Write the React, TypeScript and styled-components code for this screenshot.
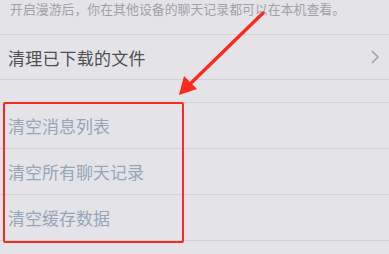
import React from 'react';
import styled, { createGlobalStyle } from 'styled-components';

const GlobalStyle = createGlobalStyle`
  html, body {
    margin: 0;
    padding: 0;
    background: #e4e4e8;
  }
  body {
    font-family: "Noto Sans CJK SC", "Noto Sans", sans-serif;
    overflow: hidden;
  }
`;

const clearItems = ['清空消息列表', '清空所有聊天记录', '清空缓存数据'];

const App: React.FC = () => {
  return (
    <Page>
      <GlobalStyle />
      <Hint>开启漫游后，你在其他设备的聊天记录都可以在本机查看。</Hint>
      <Row>
        <RowLabel>清理已下载的文件</RowLabel>
        <Chevron viewBox="0 0 10 16">
          <path d="M2 2 L8 8 L2 14" fill="none" stroke="#a3a3a8" strokeWidth="1.6" />
        </Chevron>
      </Row>
      <Gap />
      <List>
        {clearItems.map((item) => (
          <ListRow key={item}>
            <ClearLabel>{item}</ClearLabel>
          </ListRow>
        ))}
      </List>

      <Highlight />
      <Arrow viewBox="0 0 389 254">
        <line x1="263" y1="13" x2="188" y2="86" stroke="#fb2a1e" strokeWidth="3.4" strokeLinecap="round" />
        <polygon points="179,95 184,76 197,89" fill="#fb2a1e" />
      </Arrow>
    </Page>
  );
};

const Page = styled.div`
  position: relative;
  width: 389px;
  height: 254px;
  overflow: hidden;
  background: #e4e4e8;
`;

const Hint = styled.div`
  height: 35px;
  box-sizing: border-box;
  padding: 1px 0 0 10px;
  font-size: 12.9px;
  line-height: 15px;
  color: #a2a2a6;
  white-space: nowrap;
  border-bottom: 1px solid #d3d3d7;
`;

const Row = styled.div`
  display: flex;
  align-items: center;
  justify-content: space-between;
  height: 45px;
  box-sizing: border-box;
  padding: 0 9px 0 8px;
  border-bottom: 1px solid #d3d3d7;
`;

const RowLabel = styled.span`
  font-size: 17px;
  color: #505052;
  letter-spacing: 0.2px;
`;

const Chevron = styled.svg`
  width: 10px;
  height: 16px;
`;

const Gap = styled.div`
  height: 22px;
  border-bottom: 1px solid #d6d6da;
`;

const List = styled.div`
  display: flex;
  flex-direction: column;
`;

const ListRow = styled.div`
  display: flex;
  align-items: center;
  height: 46px;
  box-sizing: border-box;
  padding-left: 8px;
  border-bottom: 1px solid #d3d3d7;
`;

const ClearLabel = styled.span`
  font-size: 17px;
  color: #97a5b8;
`;

const Highlight = styled.div`
  position: absolute;
  left: 3px;
  top: 102px;
  width: 181px;
  height: 141px;
  box-sizing: border-box;
  border: 2.5px solid #fb2a1e;
  border-radius: 2px;
  pointer-events: none;
`;

const Arrow = styled.svg`
  position: absolute;
  left: 0;
  top: 0;
  width: 389px;
  height: 254px;
  pointer-events: none;
`;

export default App;
